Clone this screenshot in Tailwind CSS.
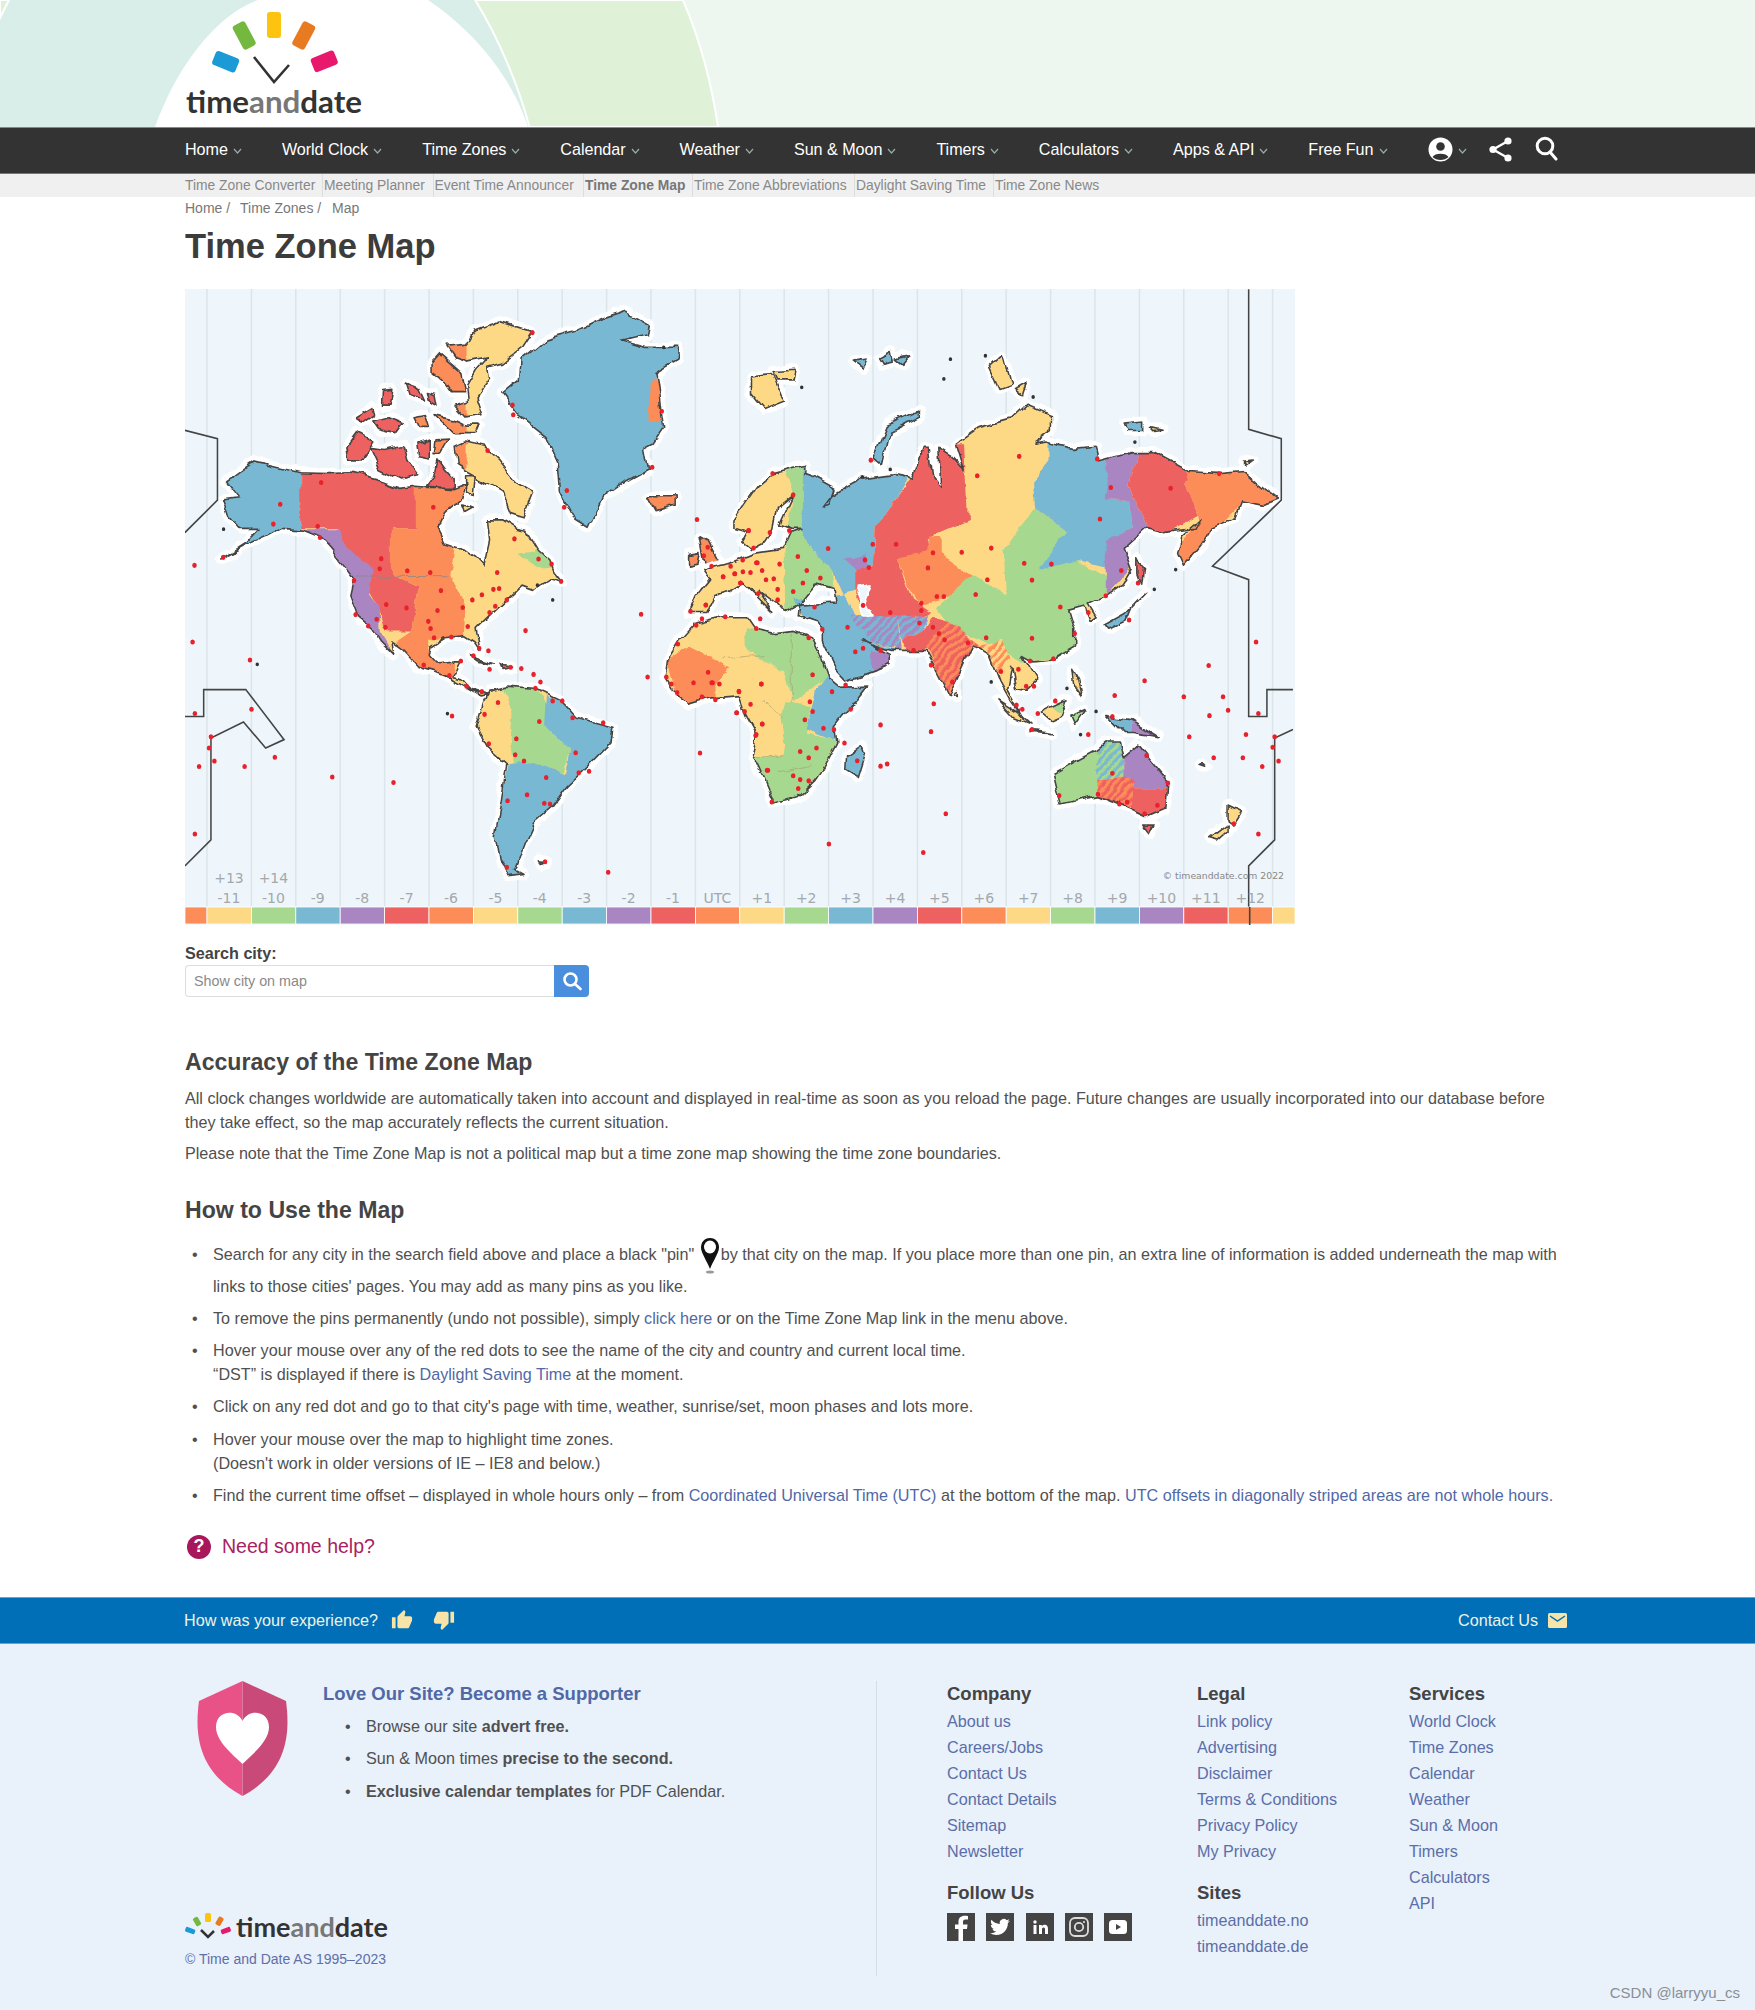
<!DOCTYPE html>
<html lang="en">
<head>
<meta charset="UTF-8" />
<title>Time Zone Map</title>
<script src="https://cdn.jsdelivr.net/npm/@tailwindcss/browser@4"></script>
</head>
<body class="bg-white font-['Liberation_Sans',Arial,sans-serif] text-[#505050] text-[16.17px] relative h-[2010px] overflow-hidden">

<!-- banner -->
<header class="h-[127px] bg-[#edf7ef]">
  <svg width="1755" height="127" viewBox="0 0 1755 127" class="block">
    <path d="M0 0H683C700 40 712 85 718 127H0Z" fill="#dff2d8" stroke="#fff" stroke-width="2"/>
    <path d="M-2 22L10 -2H474C500 40 520 90 530 129H-2Z" fill="#d9eee8" stroke="#fff" stroke-width="2"/>
    <path d="M155 127C175 70 215 15 258 0H428C480 35 515 85 528 127Z" fill="#fff"/>
    <rect x="267" y="12" width="14" height="26" rx="3" fill="#fcc40f"/>
    <rect x="237" y="22" width="14" height="27" rx="3" fill="#75b83f" transform="rotate(-28 244 35)"/>
    <rect x="297" y="22" width="14" height="27" rx="3" fill="#e87a22" transform="rotate(28 304 35)"/>
    <rect x="213" y="54" width="25" height="15" rx="3" fill="#1b9ad6" transform="rotate(22 225 62)"/>
    <rect x="312" y="54" width="25" height="15" rx="3" fill="#e8186d" transform="rotate(-22 324 62)"/>
    <path d="M254 57L274 82L289 65" fill="none" stroke="#333" stroke-width="2.6"/>
    <text x="186" y="113" font-family="Lato" font-weight="700" font-size="31" fill="#333" textLength="176" lengthAdjust="spacingAndGlyphs">time<tspan fill="#777">and</tspan>date</text>
  </svg>
</header>

<!-- main nav -->
<nav class="h-[47px] bg-[#333] border-t border-[#888] border-b border-b-[#777] pl-[185px] pb-[2px] flex items-center text-white gap-[40px] tracking-[-0.05px] leading-none">
  <a class="flex items-center gap-[5px]">Home<svg class="w-[9px] h-[6px] mt-[3px]" viewBox="0 0 9 6" fill="none" stroke="#9aa" stroke-width="1.2"><path d="M1 1l3.5 4L8 1"/></svg></a>
  <a class="flex items-center gap-[5px]">World Clock<svg class="w-[9px] h-[6px] mt-[3px]" viewBox="0 0 9 6" fill="none" stroke="#9aa" stroke-width="1.2"><path d="M1 1l3.5 4L8 1"/></svg></a>
  <a class="flex items-center gap-[5px]">Time Zones<svg class="w-[9px] h-[6px] mt-[3px]" viewBox="0 0 9 6" fill="none" stroke="#9aa" stroke-width="1.2"><path d="M1 1l3.5 4L8 1"/></svg></a>
  <a class="flex items-center gap-[5px]">Calendar<svg class="w-[9px] h-[6px] mt-[3px]" viewBox="0 0 9 6" fill="none" stroke="#9aa" stroke-width="1.2"><path d="M1 1l3.5 4L8 1"/></svg></a>
  <a class="flex items-center gap-[5px]">Weather<svg class="w-[9px] h-[6px] mt-[3px]" viewBox="0 0 9 6" fill="none" stroke="#9aa" stroke-width="1.2"><path d="M1 1l3.5 4L8 1"/></svg></a>
  <a class="flex items-center gap-[5px]">Sun &amp; Moon<svg class="w-[9px] h-[6px] mt-[3px]" viewBox="0 0 9 6" fill="none" stroke="#9aa" stroke-width="1.2"><path d="M1 1l3.5 4L8 1"/></svg></a>
  <a class="flex items-center gap-[5px]">Timers<svg class="w-[9px] h-[6px] mt-[3px]" viewBox="0 0 9 6" fill="none" stroke="#9aa" stroke-width="1.2"><path d="M1 1l3.5 4L8 1"/></svg></a>
  <a class="flex items-center gap-[5px]">Calculators<svg class="w-[9px] h-[6px] mt-[3px]" viewBox="0 0 9 6" fill="none" stroke="#9aa" stroke-width="1.2"><path d="M1 1l3.5 4L8 1"/></svg></a>
  <a class="flex items-center gap-[5px]">Apps &amp; API<svg class="w-[9px] h-[6px] mt-[3px]" viewBox="0 0 9 6" fill="none" stroke="#9aa" stroke-width="1.2"><path d="M1 1l3.5 4L8 1"/></svg></a>
  <a class="flex items-center gap-[5px]">Free Fun<svg class="w-[9px] h-[6px] mt-[3px]" viewBox="0 0 9 6" fill="none" stroke="#9aa" stroke-width="1.2"><path d="M1 1l3.5 4L8 1"/></svg></a>
  <div class="flex items-center ml-0 gap-[23px]">
    <span class="flex items-center gap-[5px]">
      <svg class="w-[25px] h-[25px]" viewBox="0 0 25 25"><circle cx="12.5" cy="12.5" r="12" fill="#fff"/><circle cx="12.5" cy="9.5" r="4.3" fill="#333"/><path d="M4.5 20c2-4.500 14-4.500 16 0c-4 4-12 4-16 0Z" fill="#333"/></svg>
      <svg class="w-[9px] h-[6px] mt-[3px]" viewBox="0 0 9 6" fill="none" stroke="#9aa" stroke-width="1.2"><path d="M1 1l3.5 4L8 1"/></svg>
    </span>
    <svg class="w-[23px] h-[25px] -ml-[1px]" viewBox="0 0 23 25" fill="#fff"><circle cx="19" cy="4" r="3.6"/><circle cx="4" cy="12.500" r="3.600"/><circle cx="19" cy="21" r="3.600"/><path d="M4 12.500L19 4M4 12.500L19 21" stroke="#fff" stroke-width="2.400"/></svg>
    <svg class="w-[23px] h-[25px] -mt-[3px]" viewBox="0 0 23 25" fill="none" stroke="#fff" stroke-width="3"><circle cx="10" cy="10" r="7.800"/><path d="M15 16l6 7" stroke-linecap="round"/></svg>
  </div>
</nav>

<!-- sub nav -->
<div class="h-[23px] bg-[#f0f0f0] pl-[185px] flex items-center text-[13.850px] text-[#888] leading-none">
  <a class="w-[137px] h-full flex items-center">Time Zone Converter</a>
  <a class="w-[110.500px] h-full flex items-center border-l border-[#ddd] pl-[1px]">Meeting Planner</a>
  <a class="w-[150.500px] h-full flex items-center border-l border-[#ddd] pl-[1px]">Event Time Announcer</a>
  <a class="w-[109px] h-full flex items-center border-l border-[#ddd] pl-[1px] font-bold text-[#777]">Time Zone Map</a>
  <a class="w-[162px] h-full flex items-center border-l border-[#ddd] pl-[1px]">Time Zone Abbreviations</a>
  <a class="w-[139px] h-full flex items-center border-l border-[#ddd] pl-[1px]">Daylight Saving Time</a>
  <a class="h-full flex items-center border-l border-[#ddd] pl-[1px]">Time Zone News</a>
</div>

<main class="pl-[185px]">
  <div class="h-[22px] flex items-center text-[14px] text-[#777] leading-none">
    <span class="w-[55px]">Home /</span><span class="w-[92px]">Time Zones /</span><span>Map</span>
  </div>
  <h1 class="mt-[5px] text-[34.500px] leading-[44px] font-bold text-[#3c3c3c]">Time Zone Map</h1>

  <!-- map, drawn in two groups whose inner units follow the west and east halves -->
  <svg class="block mt-[21px]" width="1110" height="636" viewBox="185 289 1110 636">
    <defs>
      <filter id="rough" filterUnits="userSpaceOnUse" x="185" y="289" width="1110" height="618" color-interpolation-filters="sRGB">
        <feTurbulence type="fractalNoise" baseFrequency="0.045" numOctaves="4" seed="7" result="n"/>
        <feDisplacementMap in="SourceGraphic" in2="n" scale="9" xChannelSelector="R" yChannelSelector="G"/>
        <feGaussianBlur stdDeviation="0.35"/>
      </filter>
      <pattern id="s1" width="16" height="16" patternUnits="userSpaceOnUse" patternTransform="rotate(-45)"><rect width="16" height="16" fill="#78b8d2"/><rect width="16" height="8" fill="#a985c2"/></pattern>
      <pattern id="s2" width="16" height="16" patternUnits="userSpaceOnUse" patternTransform="rotate(-45)"><rect width="16" height="16" fill="#ee6161"/><rect width="16" height="8" fill="#fc8d59"/></pattern>
      <pattern id="s3" width="16" height="16" patternUnits="userSpaceOnUse" patternTransform="rotate(-45)"><rect width="16" height="16" fill="#fc8d59"/><rect width="16" height="8" fill="#fdd985"/></pattern>
      <pattern id="s4" width="16" height="16" patternUnits="userSpaceOnUse" patternTransform="rotate(-45)"><rect width="16" height="16" fill="#78b8d2"/><rect width="16" height="8" fill="#a6d88f"/></pattern>

      <path id="na" d="M220 432L280 445L340 458L415 460L470 458L540 475L600 495L640 490L740 498L775 485L760 520L720 550L700 590L720 625L770 640L800 660L820 680L835 620L830 570L870 570L905 590L930 595L960 640L990 665L1000 690L1025 718L990 710L950 735L920 725L880 760L845 790L800 830L810 880L795 860L770 845L720 850L685 870L680 890L700 910L740 905L755 905L735 940L760 945L790 975L830 985L810 988L770 965L730 945L690 930L650 920L610 880L580 860L585 892L550 860L530 830L490 800L470 750L480 710L455 680L420 640L390 610L350 595L290 590L250 610L200 630L160 650L130 665L200 625L235 590L180 590L150 560L135 520L175 515L145 480L190 450Z"/>
      <path id="sa" d="M835 975L880 965L950 970L1020 1000L1060 1040L1160 1065L1155 1095L1075 1170L1040 1200L1000 1250L950 1290L925 1340L900 1400L920 1410L890 1415L860 1380L850 1320L865 1240L880 1150L830 1110L800 1060L820 1000Z"/>
      <path id="ell" d="M722 155L775 150L790 125L860 100L945 125L920 160L870 195L830 205L835 235L800 280L815 320L770 325L745 300L780 290L775 255L800 215L830 185L775 195L745 185Z"/>
      <path id="baf" d="M745 395L770 385L820 395L860 430L905 480L950 505L925 565L890 555L865 500L825 480L795 465L775 455L750 440Z"/>
      <path id="dev" d="M690 320L740 330L775 345L810 345L800 365L740 365Z"/>
      <path id="gr" d="M870 270L910 240L915 190L980 140L1060 120L1130 90L1190 72L1255 105L1250 130L1180 145L1240 160L1330 160L1325 190L1270 220L1280 290L1290 350L1260 390L1240 400L1250 450L1190 480L1130 520L1095 590L1060 570L1020 500L1015 440L980 370L910 320L890 295Z"/>
      <clipPath id="c-na"><use href="#na"/></clipPath>
      <clipPath id="c-sa"><use href="#sa"/></clipPath>
      <clipPath id="c-ell"><use href="#ell"/></clipPath>
      <clipPath id="c-baf"><use href="#baf"/></clipPath>
      <clipPath id="c-dev"><use href="#dev"/></clipPath>
      <clipPath id="c-gr"><use href="#gr"/></clipPath>

      <g id="landA">
        <use href="#na"/><use href="#sa"/><use href="#ell"/><use href="#baf"/><use href="#dev"/><use href="#gr"/>
        <path d="M690 195L710 175L760 215L765 250L770 270L735 270L710 240L690 225Z"/>
        <path d="M465 395L490 365L530 385L500 425L470 425Z"/>
        <path d="M520 400L560 405L610 395L620 430L650 465L600 475L545 450Z"/>
        <path d="M645 390L680 380L680 425L650 420Z"/>
        <path d="M530 335L570 325L610 340L590 365L545 355Z"/>
        <path d="M485 325L530 300L535 320L505 340Z"/>
        <path d="M695 380L725 378L705 410L690 410Z"/>
        <path d="M700 425L720 450L740 470L740 495L670 495L690 470Z"/>
        <path d="M620 245L650 255L665 285L630 275Z"/>
        <path d="M670 265L690 270L695 295L675 285Z"/>
        <path d="M635 325L665 320L675 350L650 350Z"/>
        <path d="M558 265L585 262L578 295L555 295Z"/>
        <path d="M775 465L800 465L795 510L775 500Z"/>
        <path d="M762 530L790 540L770 550Z"/>
        <path d="M1250 515L1320 515L1320 535L1270 548Z"/>
        <path d="M1385 610L1405 620L1440 680L1400 690L1395 660Z"/>
        <path d="M1355 655L1385 650L1380 675L1355 680Z"/>
        <path d="M785 895L850 915L800 905Z"/>
        <path d="M865 915L895 920L870 925Z"/>
        <path d="M965 1380L988 1382L970 1386Z"/>
      </g>

      <path id="eu" d="M90 570L150 490L190 460L270 440L270 460L300 470L350 495L335 535L320 540L345 510L380 490L420 470L500 460L550 470L575 400L590 400L600 470L620 490L615 400L650 420L680 450L660 390L720 350L800 330L840 295L905 320L905 360L860 390L890 385L960 400L1020 395L1030 430L1110 410L1170 410L1260 455L1340 460L1400 455L1460 500L1490 520L1450 535L1395 525L1380 560L1320 585L1290 630L1245 680L1230 650L1240 610L1295 565L1280 590L1190 600L1150 590L1090 640L1110 690L1090 720L1045 750L1000 770L1020 800L1005 810L990 775L950 785L965 830L965 870L910 900L860 905L830 890L870 950L840 975L810 970L800 920L790 970L830 1040L800 1000L770 950L745 890L720 875L700 870L660 950L640 985L610 930L580 880L540 880L490 880L440 865L420 855L490 890L490 910L450 925L375 950L345 920L315 860L315 830L300 810L250 795L255 770L350 765L345 735L300 725L260 770L220 790L200 770L150 735L190 790L115 720L80 740L40 750L20 790L-30 790L-20 770L-10 750L25 710L10 690L80 670L135 650L210 640L230 600L265 590L235 590L205 580L240 510L200 540L190 590L170 620L130 640L110 625L125 600L90 590Z"/>
      <path id="af" d="M-84 905L-54 860L-10 815L54 800L123 800L145 830L195 840L240 835L290 850L300 870L330 945L360 968L430 965L400 1000L345 1065L350 1100L310 1170L295 1190L250 1230L190 1245L165 1190L135 1130L145 1080L115 1030L100 990L30 995L-30 1010L-65 985L-90 945Z"/>
      <path id="au" d="M910 1170L1020 1115L1040 1100L1080 1100L1090 1135L1130 1105L1205 1190L1200 1255L1150 1275L1090 1250L1025 1225L930 1245Z"/>
      <path id="png" d="M1050 1035L1110 1045L1180 1085L1120 1075L1090 1075Z"/>
      <path id="bor" d="M875 1025L945 995L930 1040L905 1050Z"/>
      <clipPath id="c-eu"><use href="#eu"/></clipPath>
      <clipPath id="c-af"><use href="#af"/></clipPath>
      <clipPath id="c-au"><use href="#au"/></clipPath>
      <clipPath id="c-png"><use href="#png"/></clipPath>
      <g id="landB">
        <use href="#eu"/><use href="#af"/><use href="#au"/><use href="#png"/><use href="#bor"/>
        <path d="M1145 1295L1170 1295L1160 1312Z"/>
        <path d="M1310 1330L1360 1295L1360 1310L1330 1335Z"/>
        <path d="M1360 1250L1395 1265L1375 1295L1360 1285Z"/>
        <path d="M1040 820L1100 790L1145 745L1115 775L1100 810L1050 832Z"/>
        <path d="M1125 660L1140 690L1135 725L1125 700Z"/>
        <path d="M770 1000L820 1030L850 1055L810 1040Z"/>
        <path d="M850 1070L910 1078L850 1075Z"/>
        <path d="M950 1040L990 1022L960 1060Z"/>
        <path d="M960 925L975 950L985 990L965 965Z"/>
        <path d="M378 1165L380 1130L420 1105L425 1120L405 1180Z"/>
        <path d="M648 985L660 980L660 992Z"/>
        <path d="M445 420L480 345L565 310L565 325L490 360L470 440Z"/>
        <path d="M130 230L190 225L220 290L165 310L130 270Z"/>
        <path d="M190 215L245 212L240 235L200 235Z"/>
        <path d="M395 195L430 190L420 212Z"/>
        <path d="M460 185L490 170L495 195L470 200Z"/>
        <path d="M500 190L540 182L520 205Z"/>
        <path d="M745 210L780 180L800 250L770 260Z"/>
        <path d="M810 260L840 245L830 275Z"/>
        <path d="M1090 340L1140 335L1140 360L1100 360Z"/>
        <path d="M1160 348L1190 355L1165 358Z"/>
        <path d="M1405 430L1425 428L1405 440Z"/>
        <path d="M1295 1150L1305 1160L1290 1155Z"/>
      </g>
    </defs>

    <rect x="185" y="289" width="1110" height="636" fill="#eef6fb"/>
    <path d="M207 289V907M251.400 289V907M295.800 289V907M340.200 289V907M384.600 289V907M429 289V907M473.400 289V907M517.800 289V907M562.200 289V907M606.600 289V907M651 289V907M695.400 289V907M739.800 289V907M784.200 289V907M828.600 289V907M873 289V907M917.400 289V907M961.800 289V907M1006.200 289V907M1050.600 289V907M1095 289V907M1139.400 289V907M1183.800 289V907M1228.200 289V907M1272.600 289V907" stroke="#dbe5ea" stroke-width="1.500"/>

    <g filter="url(#rough)">
    <!-- west -->
    <g transform="translate(170 280) scale(.3827 .4209)" stroke-linejoin="round">
      <use href="#landA" fill="#fff" stroke="#fff" stroke-width="26"/>
      <use href="#landA" fill="#ee6161"/>
      <g clip-path="url(#c-na)">
        <rect x="100" y="400" width="1000" height="620" fill="#fdd985"/>
        <rect x="100" y="400" width="240" height="300" fill="#78b8d2"/>
        <path d="M340 440H640V590H580V700L650 730L630 835H560L540 770L520 740L525 700L450 620L440 590H340Z" fill="#ee6161"/>
        <path d="M355 592H445L455 625L530 690L520 745L545 775L548 835L590 900L530 860L500 820L460 740Z" fill="#a985c2"/>
        <path d="M640 470H775L760 520L740 640L730 700L770 770L765 845L680 855L680 890L740 905L735 950L830 1000L700 960L640 930L590 860L630 835L650 730L580 700V590H640Z" fill="#fc8d59"/>
        <path d="M912 650L950 645L960 615L1000 680L960 685Z" fill="#a6d88f"/>
        <path d="M482 703L725 705" stroke="#888" stroke-width="2" fill="none"/>
      </g>
      <g clip-path="url(#c-sa)">
        <rect x="780" y="950" width="400" height="480" fill="#fdd985"/>
        <path d="M870 960L950 960L990 1020L980 1060L1045 1120L1025 1170L950 1145L900 1160L890 1090L895 1030Z" fill="#a6d88f"/>
        <path d="M985 990L1070 1020L1170 1060L1160 1100L1080 1170L1030 1180L1045 1120L980 1060Z" fill="#78b8d2"/>
        <path d="M885 1150L950 1145L1030 1172L1090 1165L1000 1260L900 1430L840 1400L860 1260Z" fill="#78b8d2"/>
      </g>
      <g clip-path="url(#c-ell)"><rect x="700" y="90" width="260" height="240" fill="#fdd985"/><rect x="700" y="90" width="75" height="240" fill="#fc8d59"/></g>
      <g clip-path="url(#c-baf)"><rect x="700" y="370" width="270" height="200" fill="#fdd985"/><rect x="700" y="370" width="75" height="200" fill="#fc8d59"/></g>
      <g clip-path="url(#c-dev)"><rect x="680" y="310" width="140" height="60" fill="#fdd985"/><rect x="680" y="310" width="95" height="60" fill="#fc8d59"/></g>
      <g clip-path="url(#c-gr)"><rect x="860" y="60" width="480" height="540" fill="#78b8d2"/><rect x="1253" y="232" width="30" height="108" fill="#fc8d59"/></g>
      <path d="M690 195L710 175L760 215L765 250L770 270L735 270L710 240L690 225Z" fill="#fc8d59"/>
      <path d="M695 380L725 378L705 410L690 410Z" fill="#fc8d59"/>
      <path d="M635 325L665 320L675 350L650 350Z" fill="#fc8d59"/>
      <path d="M775 465L800 465L795 510L775 500ZM762 530L790 540L770 550Z" fill="#fdd985"/>
      <path d="M1250 515L1320 515L1320 535L1270 548Z" fill="#fc8d59"/>
      <path d="M1385 610L1405 620L1440 680L1400 690L1395 660Z" fill="#fc8d59"/>
      <path d="M1355 655L1385 650L1380 675L1355 680Z" fill="#fc8d59"/>
      <path d="M785 895L850 915L800 905Z" fill="#fc8d59"/>
      <use href="#landA" fill="none" stroke="#444" stroke-width="4"/>
    </g>

    <!-- east -->
    <g transform="translate(700 280) scale(.3883 .4209)" stroke-linejoin="round">
      <use href="#landB" fill="#fff" stroke="#fff" stroke-width="26"/>
      <use href="#landB" fill="#fdd985"/>
      <g clip-path="url(#c-eu)">
        <rect x="-50" y="280" width="1600" height="720" fill="#fdd985"/>
        <path d="M215 440H275L270 520L265 610L340 690L345 760L220 790L215 640L240 510Z" fill="#a6d88f"/>
        <path d="M265 430L550 450L500 530L450 590L445 680L400 690L410 740L370 750L340 690L265 610Z" fill="#78b8d2"/>
        <path d="M240 760L370 750L400 790L440 860L510 880L500 930L345 960L290 850Z" fill="#78b8d2"/>
        <path d="M440 880L500 880L495 915L440 930Z" fill="#a985c2"/>
        <path d="M370 665L425 650L435 690L400 690Z" fill="#a985c2"/>
        <path d="M550 460L575 390H680L690 570L615 600L580 620L585 650L510 660L550 760L600 790L520 810L440 800L400 760L400 690L445 680L450 590L500 530Z" fill="#ee6161"/>
        <path d="M510 660L580 645L585 612H620V650L705 700L650 750L580 770L555 760Z" fill="#fc8d59"/>
        <path d="M860 540L945 600L900 680L870 690L960 660L1070 720L1010 770L960 790L970 890L830 905L740 860L650 830L610 780L705 700L790 750L785 640Z" fill="#a6d88f"/>
        <path d="M895 380L1050 400V520H1105L1110 590L1050 620L1045 680L970 665L870 690L945 600L860 540L855 480L895 430Z" fill="#78b8d2"/>
        <path d="M1050 420L1130 400L1105 490L1155 590L1090 640L1115 680L1045 750V620L1110 590L1105 520H1045Z" fill="#a985c2"/>
        <path d="M1130 400L1170 400L1260 460L1245 490L1285 560L1190 610L1155 590L1105 490Z" fill="#ee6161"/>
        <path d="M1260 450H1500V540L1395 530L1320 600L1250 690L1220 640L1290 570L1285 560L1245 490Z" fill="#fc8d59"/>
        <path d="M385 790L510 800L520 880L440 860L400 820Z" fill="url(#s1)"/>
        <path d="M510 800L590 795L580 830L520 860Z" fill="url(#s1)"/>
        <path d="M520 860L580 830L600 800L640 810L720 875H580L540 890Z" fill="#ee6161"/>
        <path d="M580 870L640 810L720 870L650 1000Z" fill="url(#s2)"/>
        <path d="M720 870L780 855L800 900L770 940L745 900Z" fill="url(#s3)"/>
      </g>
      <g clip-path="url(#c-af)">
        <path d="M-85 905L-30 870L75 920L40 960L40 1000L-30 1012L-65 990Z" fill="#fc8d59"/>
        <path d="M120 830L320 830L345 940L320 950L240 1000L215 930L120 880Z" fill="#a6d88f"/>
        <path d="M330 935L440 965L340 1095L270 1070L285 1020L300 970Z" fill="#78b8d2"/>
        <path d="M220 1000L285 1010L270 1080L350 1095L300 1180L250 1240L190 1250L130 1135L215 1130L220 1100L210 1040Z" fill="#a6d88f"/>
        <path d="M135 1135L215 1130M200 1170L290 1150M235 840L235 1000M60 900L160 890M160 1000L215 1040" fill="none" stroke="#a89a6a" stroke-width="1.500"/>
      </g>
      <g clip-path="url(#c-au)">
        <rect x="900" y="1090" width="123" height="170" fill="#a6d88f"/>
        <rect x="1023" y="1090" width="67" height="95" fill="url(#s4)"/>
        <rect x="1090" y="1090" width="125" height="115" fill="#a985c2"/>
        <rect x="1023" y="1185" width="92" height="70" fill="url(#s2)"/>
        <path d="M1115 1205H1215V1280H1115Z" fill="#ee6161"/>
      </g>
      <g clip-path="url(#c-png)"><rect x="1040" y="1030" width="70" height="60" fill="#78b8d2"/><rect x="1110" y="1030" width="80" height="60" fill="#a985c2"/></g>
      <path d="M445 420L480 345L565 310L565 325L490 360L470 440Z" fill="#78b8d2"/>
      <path d="M378 1165L380 1130L420 1105L425 1120L405 1180Z" fill="#78b8d2"/>
      <path d="M1040 820L1100 790L1145 745L1115 775L1100 810L1050 832Z" fill="#78b8d2"/>
      <path d="M1125 660L1140 690L1135 725L1125 700Z" fill="#ee6161"/>
      <path d="M1145 1295L1170 1295L1160 1312Z" fill="#ee6161"/>
      <path d="M1090 340L1140 335L1140 360L1100 360Z" fill="#78b8d2"/>
      <path d="M395 195L430 190L420 212ZM460 185L490 170L495 195L470 200ZM500 190L540 182L520 205Z" fill="#78b8d2"/>
      <path d="M905 1010L945 995L930 1030Z" fill="#a6d88f"/>
      <path d="M950 1040L990 1022L960 1060Z" fill="#a6d88f"/>
      <use href="#landB" fill="none" stroke="#444" stroke-width="4"/>
      <!-- caspian cut back into the big outline -->
      <path d="M408 730L440 725L425 760L445 795L425 795L405 750Z" fill="#eef6fb" stroke="#fff" stroke-width="5"/>
    </g>
    </g>

    <!-- date line and small dark islets -->
    <g transform="translate(170 280) scale(.3827 .4209)" fill="none">
      <path d="M39 357L124 377V523L39 600M39 1037H88V973H198L298 1092L250 1112L192 1050L107 1088V1330L39 1392" stroke="#444" stroke-width="4"/>
      <path d="M228 913h0M140 592h0M725 1030h0M1290 160h0M960 725h0M1000 760h0" stroke="#333" stroke-width="9" stroke-linecap="round"/>
    </g>
    <g transform="translate(700 280) scale(.3883 .4209)" fill="none">
      <path d="M1413 22V355L1497 377V523L1320 680L1413 712V1037H1460V973H1527M1527 1068L1480 1088V1330L1413 1392V1530" stroke="#444" stroke-width="4"/>
      <path d="M628 235h0M262 255h0M645 188h0M735 180h0M858 278h0M1120 385h0M750 955h0M418 468h0M490 450h0M1170 735h0M1020 1025h0M945 970h0M1225 688h0M980 1080h0" stroke="#333" stroke-width="9" stroke-linecap="round"/>
    </g>

    <!-- cities -->
    <path transform="translate(170 280) scale(.3827 .4209)" fill="none" stroke="#e8212b" stroke-width="12" stroke-linecap="round" d="M64 678h0M59 860h0M209 903h0M213 1020h0M65 1030h0M107 1085h0M102 1112h0M116 1143h0M76 1156h0M195 1156h0M274 1134h0M424 1181h0M584 1194h0M65 1316h0M737 1036h0M139 659h0M288 533h0M270 580h0M395 481h0M386 585h0M392 612h0M481 714h0M552 662h0M548 686h0M620 691h0M680 695h0M708 738h0M699 785h0M675 811h0M681 828h0M565 771h0M618 779h0M540 806h0M485 795h0M518 822h0M563 825h0M690 850h0M735 848h0M778 823h0M765 778h0M790 760h0M815 748h0M845 735h0M860 733h0M880 760h0M850 775h0M835 790h0M855 695h0M963 663h0M997 675h0M1022 716h0M900 615h0M830 405h0M688 540h0M1037 500h0M1030 540h0M895 297h0M897 320h0M947 125h0M1260 445h0M1285 312h0M1377 569h0M1231 794h0M929 833h0M832 881h0M808 875h0M793 893h0M835 925h0M890 920h0M918 923h0M950 937h0M968 955h0M955 970h0M857 1004h0M822 1032h0M905 1090h0M833 1102h0M902 1128h0M925 1143h0M965 1049h0M1060 1123h0M1068 1171h0M1095 1167h0M983 1182h0M933 1223h0M882 1237h0M978 1243h0M993 1245h0M880 1395h0M1000 1000h0M1025 1000h0M1052 1040h0M1132 1052h0M1248 943h0M1385 1124h0M1145 1407h0M980 1382h0M663 915h0M730 940h0M760 905h0M775 965h0M815 978h0M1405 635h0M1395 655h0M1415 680h0M1465 680h0M1445 705h0M1475 698h0M1497 693h0M1535 672h0M1512 595h0M1525 637h0M1490 720h0M1400 772h0M1360 787h0M1390 805h0M1375 820h0M1327 865h0M1297 943h0M1310 960h0M1368 957h0M1418 957h0M1406 932h0M1325 980h0M1390 990h0M1425 997h0M1487 978h0M1545 960h0M1517 1008h0M1480 1028h0M1548 1055h0M1530 1082h0M1560 1165h0"/>
    <path transform="translate(700 280) scale(.3883 .4209)" fill="none" stroke="#e8212b" stroke-width="12" stroke-linecap="round" d="M822 419h0M714 465h0M1023 425h0M1058 493h0M1212 495h0M1337 460h0M1085 690h0M1030 568h0M440 428h0M187 460h0M240 510h0M125 595h0M180 600h0M230 595h0M330 638h0M252 657h0M445 628h0M505 628h0M425 665h0M435 683h0M600 648h0M674 647h0M750 637h0M835 673h0M905 675h0M587 684h0M740 712h0M855 713h0M275 690h0M310 708h0M265 720h0M240 740h0M200 735h0M205 675h0M145 672h0M110 665h0M60 705h0M90 698h0M105 720h0M130 695h0M170 712h0M190 710h0M150 745h0M160 690h0M200 760h0M15 772h0M65 800h0M145 828h0M155 805h0M295 777h0M420 773h0M490 790h0M570 768h0M610 752h0M628 752h0M710 747h0M928 777h0M1000 790h0M1045 750h0M1128 720h0M1105 808h0M965 840h0M855 851h0M737 850h0M690 862h0M600 825h0M565 815h0M570 785h0M615 840h0M630 855h0M380 825h0M315 830h0M280 850h0M400 883h0M420 875h0M465 880h0M550 880h0M595 915h0M650 955h0M290 938h0M340 978h0M375 962h0M158 960h0M100 977h0M50 960h0M30 957h0M115 1025h0M95 1028h0M283 1002h0M388 1020h0M290 1025h0M270 1045h0M318 1065h0M345 1068h0M160 1055h0M145 1080h0M300 1112h0M258 1120h0M280 1135h0M175 1165h0M240 1178h0M258 1187h0M280 1190h0M253 1208h0M185 1240h0M372 1100h0M405 1142h0M465 1155h0M482 1150h0M465 1057h0M595 1073h0M602 1007h0M633 1268h0M332 1340h0M575 1360h0M850 905h0M910 900h0M820 925h0M860 965h0M840 965h0M775 930h0M1068 987h0M1145 952h0M1246 990h0M1310 916h0M1432 860h0M1347 990h0M1360 1022h0M1312 1035h0M1438 1030h0M1406 1080h0M1480 1085h0M1475 1110h0M1490 1143h0M1448 1156h0M1398 1135h0M1323 1135h0M1260 1085h0M1062 1037h0M1150 1130h0M1062 1172h0M925 1225h0M1025 1222h0M1080 1245h0M1145 1268h0M1178 1248h0M1205 1195h0M1100 1240h0M1375 1292h0M1438 1316h0M815 1010h0M830 1020h0M915 1000h0M870 1030h0M1000 1080h0M855 1068h0"/>

    <!-- offset bar -->
    <g stroke="#fff" stroke-width=".8">
      <rect x="185" y="907" width="22" height="17" fill="#fc8d59"/>
      <rect x="207" y="907" width="44.400" height="17" fill="#fdd985"/><rect x="251.400" y="907" width="44.400" height="17" fill="#a6d88f"/><rect x="295.800" y="907" width="44.400" height="17" fill="#78b8d2"/><rect x="340.200" y="907" width="44.400" height="17" fill="#a985c2"/><rect x="384.600" y="907" width="44.400" height="17" fill="#ee6161"/><rect x="429" y="907" width="44.400" height="17" fill="#fc8d59"/>
      <rect x="473.400" y="907" width="44.400" height="17" fill="#fdd985"/><rect x="517.800" y="907" width="44.400" height="17" fill="#a6d88f"/><rect x="562.200" y="907" width="44.400" height="17" fill="#78b8d2"/><rect x="606.600" y="907" width="44.400" height="17" fill="#a985c2"/><rect x="651" y="907" width="44.400" height="17" fill="#ee6161"/><rect x="695.400" y="907" width="44.400" height="17" fill="#fc8d59"/>
      <rect x="739.800" y="907" width="44.400" height="17" fill="#fdd985"/><rect x="784.200" y="907" width="44.400" height="17" fill="#a6d88f"/><rect x="828.600" y="907" width="44.400" height="17" fill="#78b8d2"/><rect x="873" y="907" width="44.400" height="17" fill="#a985c2"/><rect x="917.400" y="907" width="44.400" height="17" fill="#ee6161"/><rect x="961.800" y="907" width="44.400" height="17" fill="#fc8d59"/>
      <rect x="1006.200" y="907" width="44.400" height="17" fill="#fdd985"/><rect x="1050.600" y="907" width="44.400" height="17" fill="#a6d88f"/><rect x="1095" y="907" width="44.400" height="17" fill="#78b8d2"/><rect x="1139.400" y="907" width="44.400" height="17" fill="#a985c2"/><rect x="1183.800" y="907" width="44.400" height="17" fill="#ee6161"/><rect x="1228.200" y="907" width="44.400" height="17" fill="#fc8d59"/>
      <rect x="1272.600" y="907" width="22.400" height="17" fill="#fdd985"/>
    </g>
    <path d="M1249.700 907V925" stroke="#444" stroke-width="1.600"/>
    <g font-family="DejaVu Sans" font-size="14" fill="#a3a8ab" text-anchor="middle">
      <text x="229" y="883">+13</text><text x="273.400" y="883">+14</text>
      <text x="229" y="903">-11</text><text x="273.400" y="903">-10</text><text x="317.800" y="903">-9</text><text x="362.200" y="903">-8</text><text x="406.600" y="903">-7</text><text x="451" y="903">-6</text><text x="495.400" y="903">-5</text><text x="539.800" y="903">-4</text><text x="584.200" y="903">-3</text><text x="628.600" y="903">-2</text><text x="673" y="903">-1</text><text x="717.400" y="903">UTC</text><text x="761.800" y="903">+1</text><text x="806.200" y="903">+2</text><text x="850.600" y="903">+3</text><text x="895" y="903">+4</text><text x="939.400" y="903">+5</text><text x="983.800" y="903">+6</text><text x="1028.200" y="903">+7</text><text x="1072.600" y="903">+8</text><text x="1117" y="903">+9</text><text x="1161.400" y="903">+10</text><text x="1205.800" y="903">+11</text><text x="1250.200" y="903">+12</text>
    </g>
    <text x="1284" y="879" font-family="DejaVu Sans" font-size="9.300" fill="#888" text-anchor="end">© timeanddate.com 2022</text>
  </svg>

  <!-- search -->
  <label class="block mt-[18px] leading-[20px] font-bold text-[#444]">Search city:</label>
  <div class="mt-[2px] flex w-[404px] h-[32px]">
    <div class="flex-1 border border-[#ddd] border-r-0 rounded-l-[4px] pl-[8px] pt-[1px] flex items-center text-[14.300px] text-[#8a8a8a]">Show city on map</div>
    <div class="w-[35px] bg-[#4a8fdd] rounded-r-[4px] flex items-center justify-center">
      <svg class="w-[20px] h-[20px]" viewBox="0 0 20 20" fill="none" stroke="#fff" stroke-width="2.600"><circle cx="8.500" cy="8.500" r="6"/><path d="M13 13l5.500 5" stroke-linecap="round"/></svg>
    </div>
  </div>

  <h2 class="mt-[50px] text-[23.100px] leading-[30px] font-bold text-[#444]">Accuracy of the Time Zone Map</h2>
  <p class="mt-[9px] leading-[24px] w-[1385px]">All clock changes worldwide are automatically taken into account and displayed in real-time as soon as you reload the page. Future changes are usually incorporated into our database before they take effect, so the map accurately reflects the current situation.</p>
  <p class="mt-[7px] leading-[24px]">Please note that the Time Zone Map is not a political map but a time zone map showing the time zone boundaries.</p>

  <h2 class="mt-[30px] text-[23.100px] leading-[30px] font-bold text-[#444]">How to Use the Map</h2>
  <ul class="mt-[13px] pl-[28px] w-[1385px]">
    <li class="relative before:absolute before:left-[-21px] before:content-['•'] leading-[32px] mb-[4px]">Search for any city in the search field above and place a black "pin" <svg class="inline-block align-middle w-[22px] h-[38px] -my-[10px]" viewBox="0 0 22 38"><path d="M11 1C5 1 2 5.500 2 10.500C2 16 8 24 11 32C14 24 20 16 20 10.500C20 5.500 17 1 11 1Z" fill="#111"/><ellipse cx="11" cy="10" rx="6" ry="6.500" fill="#fff"/><ellipse cx="11" cy="35" rx="4" ry="1.500" fill="#999"/></svg>by that city on the map. If you place more than one pin, an extra line of information is added underneath the map with links to those cities' pages. You may add as many pins as you like.</li>
    <li class="relative before:absolute before:left-[-21px] before:content-['•'] leading-[24px] mb-[8px]">To remove the pins permanently (undo not possible), simply <a class="text-[#5068a6]">click here</a> or on the Time Zone Map link in the menu above.</li>
    <li class="relative before:absolute before:left-[-21px] before:content-['•'] leading-[24px] mb-[8px]">Hover your mouse over any of the red dots to see the name of the city and country and current local time.<br />“DST” is displayed if there is <a class="text-[#5068a6]">Daylight Saving Time</a> at the moment.</li>
    <li class="relative before:absolute before:left-[-21px] before:content-['•'] leading-[24px] mb-[8.500px]">Click on any red dot and go to that city's page with time, weather, sunrise/set, moon phases and lots more.</li>
    <li class="relative before:absolute before:left-[-21px] before:content-['•'] leading-[24.500px] mb-[7px]">Hover your mouse over the map to highlight time zones.<br />(Doesn't work in older versions of IE – IE8 and below.)</li>
    <li class="relative before:absolute before:left-[-21px] before:content-['•'] leading-[24px]">Find the current time offset – displayed in whole hours only – from <a class="text-[#5068a6]">Coordinated Universal Time (UTC)</a> at the bottom of the map. <a class="text-[#5068a6]">UTC offsets in diagonally striped areas are not whole hours.</a></li>
  </ul>

  <div class="mt-[24px] h-[32px] flex items-center text-[19.500px] text-[#a8225f] pl-[2px] gap-[11px]">
    <span class="w-[24px] h-[24px] rounded-full bg-[#a8175c] text-white text-[18px] font-bold flex items-center justify-center">?</span>
    Need some help?
  </div>
</main>

<!-- feedback bar -->
<div class="mt-[34px] h-[47px] bg-[#006fb7] border-y border-[#5aa9dc] pl-[184px] pr-[188px] flex items-center justify-between text-[#eef3e6]">
  <div class="flex items-center">
    How was your experience?
    <svg class="w-[22px] h-[22px] ml-[13px]" viewBox="0 0 24 24" fill="#f6e4a9"><path d="M1 21h4V9H1v12zm22-11c0-1.100-.9-2-2-2h-6.310l.95-4.570.03-.32c0-.41-.17-.79-.44-1.060L14.170 1 7.590 7.590C7.220 7.950 7 8.450 7 9v10c0 1.100.9 2 2 2h9c.83 0 1.540-.5 1.840-1.220l3.020-7.050c.09-.23.14-.47.14-.73v-2z"/></svg>
    <svg class="w-[22px] h-[22px] ml-[20px]" viewBox="0 0 24 24" fill="#f6e4a9"><path d="M15 3H6c-.83 0-1.540.5-1.840 1.220l-3.020 7.050c-.09.23-.14.47-.14.73v2c0 1.100.9 2 2 2h6.310l-.95 4.570-.03.32c0 .41.17.79.44 1.060L9.830 23l6.590-6.590c.36-.36.58-.86.58-1.410V5c0-1.100-.9-2-2-2zm4 0v12h4V3h-4z"/></svg>
  </div>
  <div class="flex items-center gap-[10px]">
    Contact Us
    <svg class="w-[19px] h-[15px]" viewBox="0 0 19 15"><rect width="19" height="15" rx="1.500" fill="#f6e4a9"/><path d="M2 3l7.500 5L17 3" fill="none" stroke="#006fb7" stroke-width="1.500"/></svg>
  </div>
</div>

<!-- footer -->
<footer class="h-[367px] bg-[#e9f1fb] pt-[37px] pl-[185px] relative">
  <div class="flex h-[295px]">
    <div class="w-[692px] border-r border-[#d5dde5] flex flex-col pb-[7px]">
      <div class="flex">
        <svg class="ml-[11px] w-[93px] h-[115px] shrink-0" viewBox="0 0 93 115"><path d="M46.500 0L90 20C94 50 93 90 46.500 115Z" fill="#c94a78"/><path d="M46.500 0L3 20C-1 50 0 90 46.500 115Z" fill="#e85287"/><path d="M46.500 83C36 73 20 60 20 46C20 30 40 27 46.500 40C53 27 73 30 73 46C73 60 57 73 46.500 83Z" fill="#fff"/></svg>
        <div class="ml-[34px]">
          <div class="mt-[1px] text-[18.500px] leading-[24px] font-bold text-[#5068a6]">Love Our Site? Become a Supporter</div>
          <ul class="mt-[8px] pl-[43px] space-y-[8.500px] leading-[24px]">
            <li class="relative before:absolute before:left-[-21px] before:content-['•']">Browse our site <b>advert free.</b></li>
            <li class="relative before:absolute before:left-[-21px] before:content-['•']">Sun &amp; Moon times <b>precise to the second.</b></li>
            <li class="relative before:absolute before:left-[-21px] before:content-['•']"><b>Exclusive calendar templates</b> for PDF Calendar.</li>
          </ul>
        </div>
      </div>
      <div class="mt-auto">
        <svg width="205" height="36" viewBox="0 0 205 36" class="block">
          <rect x="20" y="2" width="6" height="9" rx="1.500" fill="#fcc40f"/>
          <rect x="9" y="6" width="5.500" height="9" rx="1.500" fill="#75b83f" transform="rotate(-30 12 10)"/>
          <rect x="32" y="6" width="5.500" height="9" rx="1.500" fill="#e87a22" transform="rotate(30 35 10)"/>
          <rect x="0" y="17" width="10" height="5" rx="1.500" fill="#1b9ad6" transform="rotate(20 5 20)"/>
          <rect x="36" y="17" width="10" height="5" rx="1.500" fill="#e8186d" transform="rotate(-20 41 20)"/>
          <path d="M16 19L23 26L29 20" fill="none" stroke="#333" stroke-width="2.500"/>
          <text x="51" y="26" font-family="Lato" font-weight="700" font-size="26" fill="#333" textLength="152" lengthAdjust="spacingAndGlyphs">time<tspan fill="#777">and</tspan>date</text>
        </svg>
        <div class="mt-[2px] text-[14px] leading-[20px] text-[#5f6fa8]">© Time and Date AS 1995–2023</div>
      </div>
    </div>

    <div class="pl-[70px] w-[320px] pt-[1px]">
      <div class="text-[18.500px] leading-[24px] font-bold text-[#444]">Company</div>
      <ul class="mt-[2px] leading-[26px] text-[#5a6ea8]"><li>About us</li><li>Careers/Jobs</li><li>Contact Us</li><li>Contact Details</li><li>Sitemap</li><li>Newsletter</li></ul>
      <div class="mt-[17px] text-[18.500px] leading-[24px] font-bold text-[#444]">Follow Us</div>
      <div class="mt-[8px] flex gap-[11.300px]">
        <svg class="w-[28px] h-[28px]" viewBox="0 0 28 28"><rect width="28" height="28" fill="#444"/><path d="M16 28V16h4l.6-4.500H16V9c0-1.500.5-2.500 2.500-2.500H21V3c-.6-.1-2-.2-3.500-.2C14 2.800 11.500 5 11.500 8.500v3H8V16h3.500v12Z" fill="#fff"/></svg>
        <svg class="w-[28px] h-[28px]" viewBox="-5 -5 34 34"><rect x="-5" y="-5" width="34" height="34" fill="#444"/><path d="M23.953 4.570a10 10 0 01-2.825.775 4.958 4.958 0 002.163-2.723c-.951.555-2.005.959-3.127 1.184a4.920 4.920 0 00-8.384 4.482C7.690 8.095 4.067 6.130 1.640 3.162a4.822 4.822 0 00-.666 2.475c0 1.710.870 3.213 2.188 4.096a4.904 4.904 0 01-2.228-.616v.060a4.923 4.923 0 003.946 4.827 4.996 4.996 0 01-2.212.085 4.936 4.936 0 004.604 3.417 9.867 9.867 0 01-6.102 2.105c-.390 0-.779-.023-1.170-.067a13.995 13.995 0 007.557 2.209c9.053 0 13.998-7.496 13.998-13.985 0-.210 0-.420-.015-.630A9.935 9.935 0 0024 4.590z" fill="#fff"/></svg>
        <svg class="w-[28px] h-[28px]" viewBox="0 0 28 28"><rect width="28" height="28" fill="#444"/><circle cx="9" cy="9" r="1.700" fill="#fff"/><rect x="7.500" y="12" width="3" height="9" fill="#fff"/><path d="M13 12h2.800v1.300c.6-1 1.700-1.500 2.800-1.500 2.600 0 3.400 1.700 3.400 4.200V21h-3v-4.500c0-1.200-.3-2.100-1.400-2.100-1.200 0-1.600.9-1.600 2.100V21h-3Z" fill="#fff"/></svg>
        <svg class="w-[28px] h-[28px]" viewBox="0 0 28 28"><rect width="28" height="28" fill="#444"/><rect x="5" y="5" width="18" height="18" rx="5" fill="none" stroke="#ddd" stroke-width="1.800"/><circle cx="14" cy="14" r="4.200" fill="none" stroke="#ddd" stroke-width="1.800"/><circle cx="19" cy="9" r="1.100" fill="#ddd"/></svg>
        <svg class="w-[28px] h-[28px]" viewBox="0 0 28 28"><rect width="28" height="28" fill="#444"/><rect x="5" y="7" width="18" height="14" rx="3.500" fill="#fff"/><path d="M12 11v6l5-3Z" fill="#444"/></svg>
      </div>
    </div>

    <div class="w-[212px] pt-[1px]">
      <div class="text-[18.500px] leading-[24px] font-bold text-[#444]">Legal</div>
      <ul class="mt-[2px] leading-[26px] text-[#5a6ea8]"><li>Link policy</li><li>Advertising</li><li>Disclaimer</li><li>Terms &amp; Conditions</li><li>Privacy Policy</li><li>My Privacy</li></ul>
      <div class="mt-[17px] text-[18.500px] leading-[24px] font-bold text-[#444]">Sites</div>
      <ul class="mt-[2px] leading-[26px] text-[#5a6ea8]"><li>timeanddate.no</li><li>timeanddate.de</li></ul>
    </div>

    <div class="pt-[1px]">
      <div class="text-[18.500px] leading-[24px] font-bold text-[#444]">Services</div>
      <ul class="mt-[2px] leading-[26px] text-[#5a6ea8]"><li>World Clock</li><li>Time Zones</li><li>Calendar</li><li>Weather</li><li>Sun &amp; Moon</li><li>Timers</li><li>Calculators</li><li>API</li></ul>
    </div>
  </div>
  <div class="absolute right-[15px] bottom-[8px] text-[15px] leading-[20px] text-[#8a8f96]">CSDN @larryyu_cs</div>
</footer>
</body>
</html>
